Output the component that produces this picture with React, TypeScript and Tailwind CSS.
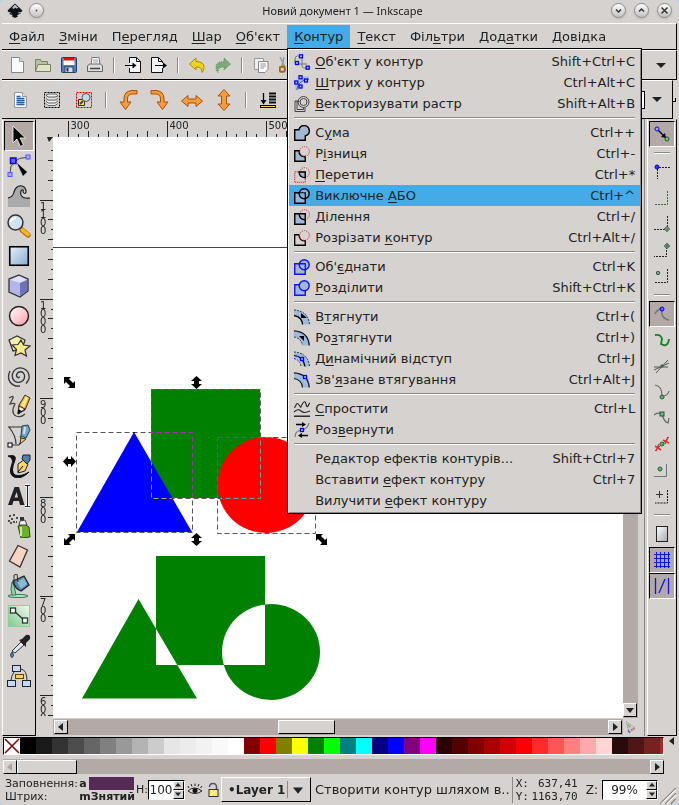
import type { ReactNode } from "react";

const raised = "border border-t-white border-l-white border-r-black border-b-black bg-[#d6d2cf]";
const pressed = "border border-t-black border-l-black border-r-white border-b-white bg-[#b3aaa7]";

function Icon({ size = 16, box = 16, children }: { size?: number; box?: number; children: ReactNode }) {
  return (
    <svg width={size} height={size} viewBox={`0 0 ${box} ${box}`} fill="none" className="shrink-0" aria-hidden="true">
      {children}
    </svg>
  );
}

/* ---------- menu icons ---------- */

const SQ = "M.75 4.75h10.5v10.5H.75z";
const FILL = "#a3b8d3";

const redCircle = <circle cx="10.5" cy="5.5" r="4.9" stroke="#d22" strokeWidth="1" strokeDasharray="1 1" />;

function node(x: number, y: number) {
  return <rect x={x} y={y} width="3" height="3" fill="#bcd" stroke="#00f" strokeWidth="1.3" />;
}

const menuIcons: Record<string, ReactNode> = {
  object: (
    <>
      <path d="M5 2H3.500Q1 2 1 5v4q0 1 2 1h10M8 3v9q0 2 2 2h3" stroke="#777" />
      {node(5.5, 0.8)}
      {node(1.5, 7.5)}
      {node(12.2, 12.2)}
    </>
  ),
  stroke: (
    <>
      <path d="M1 12C1 5 6 1 15 1v4C9 5 5 9 5 15H1z" fill="#a9c4e4" />
      <path d="M3 15c0-6 5-10 12-11" stroke="#557" />
      {node(5, 0.8)}
      {node(10.5, 4)}
      {node(0.8, 6)}
      {node(5, 10)}
    </>
  ),
  trace: (
    <>
      <path d="M4 5H1v10.500h10V12" stroke="#444" />
      <path d="M5.500 5.500H3v8h6.500V12" stroke="#444" />
      <circle cx="9.5" cy="6" r="5.5" stroke="#444" />
      <circle cx="9.5" cy="6" r="3.5" stroke="#444" />
    </>
  ),
  union: <path d="M.75 4.750H5A5.200 5.200 0 1 1 11.250 10.900v4.350H.750z" fill={FILL} stroke="#000" strokeWidth="1.4" />,
  difference: (
    <>
      <path d="M5.200 4.750H.750v10.500h10.500V10.500A5 5 0 0 1 5.200 4.750z" fill={FILL} stroke="#000" strokeWidth="1.4" />
      {redCircle}
    </>
  ),
  intersection: (
    <>
      <path d={SQ} stroke="#c00" strokeWidth="1" strokeDasharray="1 1" />
      {redCircle}
      <path d="M5 5h6.200v5.700Q5.500 10.500 5 5z" fill={FILL} stroke="#000" strokeWidth="1.4" />
    </>
  ),
  exclusion: (
    <>
      <path d={SQ} fill="#8fb6df" stroke="#000" strokeWidth="1.4" />
      <circle cx="10.2" cy="5.8" r="5" fill="#7fb4e6" stroke="#000" strokeWidth="1.4" />
      <path d="M5.500 4.750h5.750v6" stroke="#000" strokeWidth="1.2" />
    </>
  ),
  division: (
    <>
      <path d={SQ} fill={FILL} stroke="#000" strokeWidth="1.4" />
      {redCircle}
      <path d="M5 4.750q.5 6 6.250 6" stroke="#000" strokeWidth="1.4" />
    </>
  ),
  cut: (
    <>
      <path d="M5.200 4.750H.750v10.500h10.500V10.700A5 5 0 0 1 5.200 4.750" stroke="#000" strokeWidth="1.3" />
      {redCircle}
    </>
  ),
  combine: (
    <>
      <path d={SQ} fill={FILL} stroke="#11f" strokeWidth="1.4" />
      <circle cx="10.2" cy="5.8" r="5" fill={FILL} stroke="#11f" strokeWidth="1.4" />
      <path d="M5.500 4.750h5.750v6" stroke="#11f" strokeWidth="1.3" />
    </>
  ),
  breakApart: (
    <>
      <path d={SQ} fill={FILL} stroke="#11f" strokeWidth="1.4" />
      <circle cx="10.2" cy="5.8" r="5" fill={FILL} stroke="#11f" strokeWidth="1.4" />
    </>
  ),
  inset: (
    <>
      <path d="M0 1.500Q14 2 15.500 15.500H8.500Q8 8 0 6.500z" fill="#9dbcdd" />
      <path d="M0 1Q14 2 15.500 15" stroke="#335" strokeDasharray="2 1" />
      <path d="M0 6.500Q8 8 8.500 15.500" stroke="#000" strokeWidth="1.3" />
      <path d="M7 4v5h6z" fill="#000" />
    </>
  ),
  outset: (
    <>
      <path d="M0 1Q14 1.500 15.500 15.500H8.500Q8 8 0 6.500z" fill="#9dbcdd" />
      <path d="M0 .8Q14 1.500 15.300 15.500" stroke="#111" strokeWidth="1.3" />
      <path d="M0 7Q7 8 8.500 15" stroke="#335" strokeDasharray="2 1" />
      <path d="M5 6h5v5z" fill="#000" />
    </>
  ),
  dynamic: (
    <>
      <path d="M0 1.500Q14 2 15.500 15.500H8.500Q8 8 0 6.500z" fill="#9dbcdd" />
      <path d="M0 1Q14 2 15.500 15M0 7.500Q6 9 7 15" stroke="#335" strokeDasharray="2 1" />
      <path d="M0 4.500Q9 5 11 15.500" stroke="#000" strokeWidth="1.2" />
      {node(6.5, 6.5)}
    </>
  ),
  linked: (
    <>
      <path d="M0 1Q14 1.500 15.500 15.500H8.500Q8 8 0 6.500z" fill="#9dbcdd" />
      <path d="M0 .8Q14 1.500 15.300 15.500M0 6.500Q8 8 8.500 15.500" stroke="#111" strokeWidth="1.2" />
      {node(9.5, 3.5)}
    </>
  ),
  simplify: (
    <>
      <path d="M0 6q1 1 2-2t3 0 2 2 2-4 3 1 2 2 2-3" stroke="#222" strokeWidth="1.1" />
      <path d="M0 11q4-4 7-1t9 0" stroke="#222" strokeWidth="1.1" />
      <path d="M0 15.200h16" stroke="#111" strokeWidth="1.3" />
    </>
  ),
  reverse: (
    <>
      <path d="M1 15Q1 9 7 8q7-1 8-7" stroke="#777" strokeWidth="1.2" />
      <path d="M2 2.500h7M14 13.500H6" stroke="#000" strokeWidth="1.3" />
      <path d="M8 0l4 2.500L8 5zM8 11l-4 2.500L8 16z" fill="#000" />
      {node(6.5, 6.5)}
    </>
  ),
};

type MenuEntry = { before: string; key: string; after: string; accel?: string; icon?: string; active?: boolean };

const menuGroups: MenuEntry[][] = [
  [
    { before: "", key: "О", after: "б'єкт у контур", accel: "Shift+Ctrl+C", icon: "object" },
    { before: "", key: "Ш", after: "трих у контур", accel: "Ctrl+Alt+C", icon: "stroke" },
    { before: "", key: "В", after: "екторизувати растр", accel: "Shift+Alt+B", icon: "trace" },
  ],
  [
    { before: "С", key: "у", after: "ма", accel: "Ctrl++", icon: "union" },
    { before: "Р", key: "і", after: "зниця", accel: "Ctrl+-", icon: "difference" },
    { before: "", key: "П", after: "еретин", accel: "Ctrl+*", icon: "intersection" },
    { before: "Виключне ", key: "А", after: "БО", accel: "Ctrl+^", icon: "exclusion", active: true },
    { before: "", key: "Д", after: "ілення", accel: "Ctrl+/", icon: "division" },
    { before: "Розрізати ", key: "к", after: "онтур", accel: "Ctrl+Alt+/", icon: "cut" },
  ],
  [
    { before: "Об'", key: "є", after: "днати", accel: "Ctrl+K", icon: "combine" },
    { before: "", key: "Р", after: "озділити", accel: "Shift+Ctrl+K", icon: "breakApart" },
  ],
  [
    { before: "В", key: "т", after: "ягнути", accel: "Ctrl+(", icon: "inset" },
    { before: "Ро", key: "з", after: "тягнути", accel: "Ctrl+)", icon: "outset" },
    { before: "Д", key: "и", after: "намічний відступ", accel: "Ctrl+J", icon: "dynamic" },
    { before: "Зв'", key: "я", after: "зане втягування", accel: "Ctrl+Alt+J", icon: "linked" },
  ],
  [
    { before: "", key: "С", after: "простити", accel: "Ctrl+L", icon: "simplify" },
    { before: "Роз", key: "в", after: "ернути", icon: "reverse" },
  ],
  [
    { before: "Редактор ефектів контурів...", key: "", after: "", accel: "Shift+Ctrl+7" },
    { before: "Вставити ", key: "е", after: "фект контуру", accel: "Ctrl+7" },
    { before: "Вилучити ", key: "е", after: "фект контуру" },
  ],
];

function Label({ before, k, after }: { before: string; k: string; after: string }) {
  return (
    <span className="whitespace-pre">
      {before}
      <span className="underline underline-offset-2">{k}</span>
      {after}
    </span>
  );
}

function PathMenu() {
  return (
    <div className="absolute top-full left-0 z-20 w-[355px] border border-black bg-[#d6d2cf]">
      <div className="border border-t-white border-l-white border-r-[#8f8785] border-b-[#8f8785] py-px">
        {menuGroups.map((group, i) => (
          <div key={i}>
            {i > 0 && (
              <div className="px-[5px] py-[3px]">
                <div className="h-[2px] border-t border-b border-t-[#8f8785] border-b-white" />
              </div>
            )}
            {group.map((m) => (
              <button
                key={m.before + m.key + m.after}
                className={`flex h-[21px] w-full items-center gap-[5px] px-[5px] text-left ${m.active ? "bg-[#43ace8]" : ""}`}
              >
                <Icon>{m.icon ? menuIcons[m.icon] : null}</Icon>
                <Label before={m.before} k={m.key} after={m.after} />
                <span className="ml-auto">{m.accel}</span>
              </button>
            ))}
          </div>
        ))}
      </div>
    </div>
  );
}

const menus = [
  ["", "Ф", "айл"],
  ["", "З", "міни"],
  ["П", "е", "регляд"],
  ["", "Ш", "ар"],
  ["", "О", "б'єкт"],
  ["", "К", "онтур"],
  ["", "Т", "екст"],
  ["Філ", "ь", "три"],
  ["Дод", "а", "тки"],
  ["", "Д", "овідка"],
];

function MenuBar() {
  return (
    <nav className="flex border-t border-r border-b border-t-white border-r-black border-b-black py-px">
      {menus.map(([a, b, c]) => {
        const open = b === "К";
        return (
          <div key={b + c} className="relative">
            <button className={`h-[23px] px-[7px] ${open ? "bg-[#43ace8]" : ""}`}>
              <Label before={a} k={b} after={c} />
            </button>
            {open && <PathMenu />}
          </div>
        );
      })}
    </nav>
  );
}

/* ---------- title bar ---------- */

function RoundButton({ label, children }: { label: string; children: ReactNode }) {
  return (
    <button
      aria-label={label}
      className="flex size-[15px] items-center justify-center rounded-full border border-[#8e8a88] bg-linear-to-b from-white to-[#c4c0be] shadow-sm"
    >
      <Icon size={11} box={11}>
        {children}
      </Icon>
    </button>
  );
}

function TitleBar() {
  return (
    <header className="flex h-[23px] items-center px-[5px] pb-[2px]">
      <Icon size={16}>
        <path d="M8 .5L15 7q1 1.500-1 2l-3 .500 2 1.500-3 1 1 1.500-3 1.500-3-1.500.500-1.500L2 11l2-1.500L1.500 9Q0 8 1 7z" fill="#111" />
        <path d="M8 1.500l3.500 3.500-2 .500L8 4.500 7 6 5 5z" fill="#a9c8e8" />
        <path d="M3 9.500l2 1M11 11l3-1" stroke="#357" />
      </Icon>
      <span className="ml-[6px] w-[45px]">
        <RoundButton label="Меню вікна">
          <circle cx="5.5" cy="5.5" r="1" fill="#555" />
        </RoundButton>
      </span>
      <h1 className="flex-1 text-center font-['Noto_Sans',sans-serif] text-[11px] leading-[16px]">Новий документ 1 — Inkscape</h1>
      <div className="flex gap-2">
        <RoundButton label="Згорнути">
          <path d="M3 4.500l2.500 2.500L8 4.500" stroke="#333" strokeWidth="1.5" />
        </RoundButton>
        <RoundButton label="Розгорнути">
          <path d="M3 6.500L5.500 4 8 6.500" stroke="#333" strokeWidth="1.5" />
        </RoundButton>
        <RoundButton label="Закрити">
          <path d="M2.500 2.500l6 6M8.500 2.500l-6 6" stroke="#333" strokeWidth="1.5" />
        </RoundButton>
      </div>
    </header>
  );
}

/* ---------- toolbars ---------- */

function ToolSeparator() {
  return (
    <div className="flex w-3 shrink-0 justify-center">
      <div className="h-4 w-[2px] border-l border-r border-l-[#8f8785] border-r-white" />
    </div>
  );
}

const page = <path d="M2.500.500h8l4 4v11h-12z" fill="#fafafa" stroke="#888" />;

const commands: [string, ReactNode][] = [
  ["Створити", <>{page}<path d="M10.500.500v4h4" fill="#ddd" stroke="#999" /></>],
  ["Відкрити", <><path d="M.5 14V2.500h5l1 2h6V7" fill="#b9bf9a" stroke="#7b8262" /><path d="M.5 14.500L3 7.500h12.500v7z" fill="#dfe3c8" stroke="#7b8262" /></>],
  ["Зберегти", <><rect x=".5" y=".5" width="15" height="15" rx="1" fill="#4a7fc4" stroke="#1f3d70" /><rect x="2.5" y="1" width="11" height="7" fill="#fff" /><rect x="2.5" y="1" width="11" height="2.5" fill="#d11" /><rect x="4" y="10" width="8" height="5.5" fill="#dde" stroke="#345" /><rect x="5.5" y="11" width="2" height="3.5" fill="#234" /></>],
  ["Друк", <><path d="M4 8l1-7.500h7L13 8z" fill="#fff" stroke="#777" /><path d="M6 3h5M6 5h5" stroke="#999" /><path d="M.5 9l2-2h11l2 2v5.500H.500z" fill="#ddd" stroke="#666" /><path d="M3 11.500h10" stroke="#444" strokeWidth="1.5" /></>],
  ["", null],
  ["Імпорт", <><path d="M4.500 6V.500h7l4 4v11h-11V11" fill="#f4f4f4" stroke="#111" /><path d="M11.500.500v4h4" stroke="#111" /><path d="M0 8.500h9" stroke="#000" /><path d="M7.500 5.500l4 3-4 3z" fill="#000" /></>],
  ["Експорт", <><path d="M11.500 6V4.500l-4-4h-7v15h11V11" fill="#f4f4f4" stroke="#111" /><path d="M7.500.500v4h4" stroke="#111" /><path d="M4 8.500h9" stroke="#000" /><path d="M12 5.500l4 3-4 3z" fill="#000" /></>],
  ["", null],
  ["Вернути", <path d="M.5 7L7 1v3.500q8 0 8 6 0 3-2 5 0-6-6-5.500V13z" fill="#f2d21c" stroke="#b08a00" />],
  ["Повторити", <path d="M15.500 7L9 1v3.500q-8 0-8 6 0 3 2 5 0-6 6-5.500V13z" fill="#7cab78" stroke="#4f8a4c" strokeDasharray="1 1" />],
  ["", null],
  ["Копіювати", <><path d="M1.500 1.500h9v11h-9z" fill="#eee" stroke="#999" /><path d="M5.500 4.500h9.500v8l-3 3H5.500z" fill="#f8f8f8" stroke="#888" /><path d="M7.500 7h5.500M7.500 9h5.500M7.500 11h3.500" stroke="#999" /></>],
  ["Вирізати", <><path d="M1 0l5 10M5 0L3 10" stroke="#999" strokeWidth="1.5" /><rect x=".8" y="9.8" width="5" height="5" rx="1.5" stroke="#a66a00" strokeWidth="2" /></>],
];

const arrowProps = { fill: "#f79a3b", stroke: "#a9500a", strokeLinejoin: "round" as const };

const selectorTools: [string, ReactNode][] = [
  ["Виділити все", <><path d="M5.500 3.500h8l4 4v11h-12z" fill="#f8f8f8" stroke="#999" /><path d="M13.500 3.500v4h4" fill="#ddd" stroke="#999" /><path d="M7.500 7.500h4M7.500 9.500h8M7.500 11.500h8M7.500 13.500h8M7.500 15.500h8" stroke="#2a5fa5" strokeWidth="1.3" /></>],
  ["Виділити в усіх шарах", <><rect x="3.5" y="3.5" width="15" height="15" stroke="#000" strokeDasharray="2 1" /><path d="M5 6l3-1h7l2 2-3 1H7zM5 9.500l2 1.500h7l3-1.500M5 12l2 2h7l3-2M5 14.500l2 2h7l3-2" fill="#eee" stroke="#666" /></>],
  ["Зняти виділення", <><rect x="3.5" y="3.5" width="15" height="15" stroke="#d00" strokeDasharray="2 1" /><path d="M5.500 10.500h6v6h-6z" fill="#ffd94a" stroke="#333" /><circle cx="13" cy="8.5" r="4" fill="#c5d9ec" stroke="#555" /><path d="M10 12l-3 3" stroke="#444" strokeWidth="2" /></>],
  ["", null],
  ["Обернути ліворуч", <path d="M20 1.500h-5Q7 2 7 10v3H3l5.500 7.500L14 13h-3.500v-3q0-5 4.500-5h5z" {...arrowProps} />],
  ["Обернути праворуч", <path d="M2 1.500h5q8 .500 8 8.500v3h4l-5.500 7.500L8 13h3.500v-3q0-5-4.500-5H2z" {...arrowProps} />],
  ["Віддзеркалити горизонтально", <path d="M.5 12L7 6.500v3.500h8V6.500l6.500 5.500L15 17.500V14H7v3.500z" {...arrowProps} />],
  ["Віддзеркалити вертикально", <path d="M11 .5L17 7h-3.500v8H17l-6 6.500L5 15h3.500V7H5z" {...arrowProps} />],
  ["", null],
  ["Опустити на задній план", <><path d="M6.500 4v8" stroke="#000" strokeWidth="1.3" /><path d="M3.500 11h6l-3 4.500z" fill="#000" /><path d="M12 4.500h7M12 7.500h7M12 10.500h7M12 13.500h7" stroke="#111" strokeWidth="2" /><rect x="3.5" y="16.5" width="15" height="2" fill="#ffd24a" stroke="#000" /></>],
];

function CommandBars() {
  return (
    <>
      <div className="flex h-[30px] items-center border-t border-r border-b border-t-white border-r-black border-b-black pl-[2px]">
        {commands.map(([label, art], i) =>
          art ? (
            <button key={i} aria-label={label} className="flex w-[26px] shrink-0 justify-center">
              <Icon>{art}</Icon>
            </button>
          ) : (
            <ToolSeparator key={i} />
          ),
        )}
        <button aria-label="Ще" className="mr-[10px] ml-auto">
          <Icon size={10} box={10}>
            <path d="M0 3h10L5 8z" fill="#222" />
          </Icon>
        </button>
      </div>
      <div className="flex h-[39px]">
        <div className="flex flex-1 items-center border-t border-r border-b border-t-white border-r-black border-b-black pl-[2px]">
          {selectorTools.map(([label, art], i) =>
            art ? (
              <button key={i} aria-label={label} className="flex w-8 shrink-0 justify-center">
                <Icon size={22} box={22}>
                  {art}
                </Icon>
              </button>
            ) : (
              <ToolSeparator key={i} />
            ),
          )}
          <input aria-label="X" className="ml-auto h-[18px] w-10 border border-black bg-white" />
          <button aria-label="Ще" className="mr-[10px] ml-[7px]">
            <Icon size={10} box={10}>
              <path d="M0 2h10L5 7z" fill="#222" />
            </Icon>
          </button>
        </div>
        <div className="flex w-1 items-center">
          <div className="h-[4px] w-[3px] border-r border-b border-black" />
        </div>
      </div>
    </>
  );
}

/* ---------- toolbox ---------- */

const tools: [string, ReactNode][] = [
  ["Виділення", <path d="M6 2v17l4-4 3.500 7.500 3-1.500-3.500-7h5.500z" fill="#000" stroke="#fff" strokeWidth=".8" />],
  ["Вузли", <><path d="M3 20Q2 4 21 3" stroke="#444" /><rect x="1" y="18.5" width="4" height="4" fill="#aaf" stroke="#55f" /><rect x="19" y="1" width="4" height="4" fill="#aaf" stroke="#55f" /><rect x="3.5" y="4" width="5.5" height="5.5" fill="#66f" stroke="#00f" strokeWidth="1.5" /><path d="M10 9l10 9-4 4z" fill="#000" /></>],
  ["Корекція", <><path d="M1 14q5-1 6-6 2-7 8-6 5 1 5 6-2-3-5-2-2 2-1 5 2 4 9 3v9H1z" fill="#aaa" /><path d="M1 14q5-1 6-6 2-7 8-6 4 1 4 6-1 3-3 0 1-3-1-2-2 1-1 5 2 4 9 3" stroke="#222" strokeWidth="1.2" /></>],
  ["Масштаб", <><path d="M15 16l6 5" stroke="#b9770a" strokeWidth="5.5" strokeLinecap="round" /><path d="M15.500 16l5.500 4.500" stroke="#fbb62e" strokeWidth="3.5" strokeLinecap="round" /><circle cx="8.5" cy="8.5" r="7.5" fill="#cfe3f5" stroke="#333" strokeWidth="1.5" /><path d="M4 8q1-4 5-4" stroke="#fff" strokeWidth="2" /></>],
  ["Прямокутник", <rect x="2.75" y="2.75" width="18.5" height="18.5" fill="url(#gBlue)" stroke="#000" strokeWidth="1.6" />],
  ["Паралелепіпед", <><path d="M12 1l9 4v12l-8 6-11-5V5z" fill="#aaaee6" stroke="#333" strokeWidth="1.3" /><path d="M3 6l9-4 8 4-7 3z" fill="#e0e1fa" /><path d="M13 9l7-3v11l-7 5z" fill="#6d72bb" /><path d="M3 6l10 3v13L3 17z" fill="#b3b6ea" /></>],
  ["Еліпс", <circle cx="12" cy="12" r="9.5" fill="url(#gPink)" stroke="#222" strokeWidth="1.5" />],
  ["Зірка", <><path d="M2 6l8-4 8 4-3 9-9 2z" fill="#f5efae" stroke="#333" strokeWidth="1.3" /><path d="M14 6l2.500 5 6.500 1-5 4 1.500 6-5.500-3-6 2.500 1.500-6L5 11l6-.500z" fill="#fbe98a" stroke="#333" strokeWidth="1.2" /></>],
  ["Спіраль", <path d="M12.500 12.500q-.5 2-2 1-2-2 0-4.500 3-2.500 6 0 2.500 4-.500 7.500-4 3.500-8.500.500-4-4-1-9.500 4-5 10-3 6.500 3 5.500 10-1 3-3 5M3 7q-3 6 0 11 4 5 10 4" stroke="#333" strokeWidth="1.3" />],
  ["Олівець", <><path d="M2 4q5-3 4 0l-3 6q7-2 4 2-3 7 2 10 5 2 9-2" stroke="#444" strokeWidth="1.3" /><path d="M11 20l1-9 6-10 5 3-5 12z" fill="#f7a928" stroke="#333" /><path d="M14 11l5-9 2 2-4 10z" fill="#fde98e" /><path d="M11 20l1-8 6 3z" fill="#fbe9d0" stroke="#222" /><path d="M11 20l.5-5 3 2z" fill="#000" /></>],
  ["Перо", <><path d="M1 3h14M9 20Q9 12 2 3M4 21h8q4-5 1-9" stroke="#333" strokeWidth="1.2" /><rect x="1" y="19" width="4" height="4" fill="#fff" stroke="#000" /><path d="M13 20l1-6 5 1z" fill="#ffc84a" stroke="#333" /><path d="M14 12l1-10 6-1 2 5-4 8z" fill="#6fa5cb" stroke="#244" /><path d="M17 10l1-7" stroke="#cfe4f3" strokeWidth="2" /></>],
  ["Каліграфія", <><path d="M1 2q9-2 7 4-5 12 0 15 6 2 14-3-8 8-15 5-6-3-2-13Q7 4 1 2z" fill="#111" stroke="#111" /><path d="M11 19l0-9 6-4 4 4-3 7z" fill="#ffd66b" stroke="#222" /><path d="M15 5l1-4h7l0 5-3 4z" fill="#4d7fae" stroke="#222" /><path d="M11 18l5-6" stroke="#000" /></>],
  ["Текст", <><path d="M1 21L7.500 3H12l5.500 18h-4.500l-1-4H6.500l-1.200 4zM7.500 13.500h3.500L9.700 8z" fill="#222" fillRule="evenodd" /><path d="M18 1.500h5M18 22.500h5M20.500 2v20" stroke="#fff" strokeWidth="3" /><path d="M18 1.500h5M18 22.500h5M20.500 2v20" stroke="#222" strokeWidth="1.2" /></>],
  ["Розпилювач", <><path d="M11 12l6-2 5 3 1 10-9 1z" fill="#6cb32c" stroke="#25500d" /><path d="M14 13v9" stroke="#c8ec98" strokeWidth="2" /><path d="M12 11l1-4 5-1 2 5z" fill="#eee" stroke="#444" /><rect x="13" y="3" width="4" height="3.5" fill="#333" /><path d="M2 2h2M6 1h2M4 5h2M9 4h2M1 7h2M6 8h2M9 8h1M3 9h2" stroke="#222" strokeWidth="1.6" /></>],
  ["Гумка", <path d="M11 1.500L20.500 6l-7.500 17L2.500 17z" fill="#f8d4c2" stroke="#333" strokeWidth="1.3" />],
  ["Заливка", <><ellipse cx="11" cy="22" rx="10" ry="1.6" fill="#aee0be" stroke="#376" /><path d="M5 8q-2 7 0 13h4l-2-9z" fill="#8fd0a6" stroke="#376" /><path d="M6 7l11-5 5 9-8 6q-6-2-8-10z" fill="#5588ae" stroke="#222" strokeWidth="1.3" /><path d="M10 8l7-4 3 6-6 5z" fill="#8fb6d3" /><path d="M7 9V1l3-1 1 8" stroke="#333" /></>],
  ["Градієнт", <><rect x="1.5" y="1.5" width="21" height="21" fill="url(#gGreen)" stroke="#8ccf9a" /><path d="M6 6l12 11" stroke="#333" strokeWidth="1.3" /><rect x="3.5" y="4" width="5" height="5" fill="#fff" stroke="#333" strokeWidth="1.3" /><rect x="15.5" y="14" width="5" height="5" fill="#fff" stroke="#333" strokeWidth="1.3" /></>],
  ["Піпетка", <><path d="M5 17L14 8l3 3-9 8z" fill="#dde8f0" stroke="#333" /><path d="M12 6l3-1 4-4q5-1 4 4l-4 4v4z" fill="#222" /><path d="M5 18q3 4 0 5.500Q2 22 5 18z" fill="#4f83bd" stroke="#245" /></>],
  ["З'єднання", <><path d="M7 8Q4 12 4 17M14 5q6 1 6 12" stroke="#333" /><g fill="#c3dbf2" stroke="#223"><rect x="5.5" y="1.5" width="8" height="6" /><rect x=".5" y="16.5" width="8" height="6" /><rect x="15.5" y="16.5" width="8" height="6" /></g><rect x="8.5" y="10.5" width="8" height="4" fill="#ffd24a" stroke="#640" /></>],
];

function Toolbox() {
  return (
    <aside className="w-[34px] shrink-0 border border-t-[#d6d2cf] border-l-white border-r-black border-b-black py-px pl-px">
      {tools.map(([label, art], i) => (
        <button
          key={label}
          aria-label={label}
          className={`flex h-[30px] w-[30px] items-center justify-center ${i === 0 ? pressed : ""}`}
        >
          <Icon size={24} box={24}>
            {art}
          </Icon>
        </button>
      ))}
    </aside>
  );
}

/* ---------- snap bar ---------- */

const dot = (x: number, y: number, fill = "#55b75b", stroke = "#264") => <circle cx={x} cy={y} r="2" fill={fill} stroke={stroke} />;

const snaps: { label: string; art?: ReactNode; on?: boolean }[] = [
  { label: "Прилипання", on: true, art: <><path d="M3 3l8 8" stroke="#000" strokeWidth="1.5" /><path d="M12 12l-5-1 4-4z" fill="#000" />{dot(3, 3, "#aaf", "#00f")}{dot(13, 13, "#7c7", "#152")}</> },
  { label: "" },
  { label: "Рамки", art: <><path d="M3.500 5v10M5 3.500h11" stroke="#222" strokeDasharray="2 1" />{dot(3, 3, "#33f", "#00c")}</> },
  { label: "Краї рамок", art: <path d="M13.500 1v13.500H0" stroke="#3b6b42" strokeDasharray="2 1" /> },
  { label: "Кути рамок", art: <><path d="M13.500 0v14M0 13.500h12" stroke="#222" strokeDasharray="2 1" /><path d="M13 10l3 3-3 3-3-3z" fill="#688c6c" stroke="#354" strokeWidth=".5" /></> },
  { label: "Середини країв", art: <><path d="M12.500 5v9.500H0" stroke="#222" strokeDasharray="2 1" /><path d="M13 1l3 3-3 3-3-3z" fill="#5a8460" stroke="#354" strokeWidth=".5" /></> },
  { label: "Центри рамок", art: <><path d="M13.500 1v13.500H1" stroke="#222" strokeDasharray="2 1" /><circle cx="4" cy="5" r="1.7" fill="#7cb083" stroke="#355" /></> },
  { label: "" },
  { label: "Вузли", on: true, art: <><path d="M1 8Q3 3 8 3q-2 9 7 11" stroke="#777" strokeWidth="1.5" />{dot(8, 3, "#66f", "#00f")}</> },
  { label: "Контури", art: <path d="M1 3q6-1 7 4l-1 5q7 4 8-5" stroke="#178022" strokeWidth="1.8" /> },
  { label: "Перетини", art: <><path d="M0 12L15 5M2 15L14 2M0 9h14" stroke="#555" /><path d="M8 6l2 2-2 2-2-2z" fill="#274" /></> },
  { label: "Гострі вузли", art: <><path d="M1 1q7 1 7 11 6 0 7-5" stroke="#666" strokeWidth="1.2" />{dot(8, 13)}</> },
  { label: "Гладкі вузли", art: <><path d="M0 5q3-3 8-1 2 8 6 9l1-5" stroke="#666" strokeWidth="1.2" /><rect x="6" y="2" width="4" height="4" fill="#6b7" stroke="#253" /></> },
  { label: "Середини відрізків", art: <><path d="M1 15L15 1" stroke="#833" /><path d="M1 10l6 4M2 15l3-7M9 4l6 3M11 8l3-7" stroke="#d33" strokeWidth="1.6" />{dot(8, 8)}</> },
  { label: "Центри об'єктів", art: <><path d="M12.500 2v12.500H0" stroke="#777" />{dot(6, 7)}</> },
  { label: "Центри обертання", art: <><path d="M13.500 2v13H1" stroke="#111" strokeDasharray="2 1" /><path d="M2 6.500h7M5.500 3v7" stroke="#333" /></> },
  { label: "" },
  { label: "Межа сторінки", art: <rect x="2.5" y=".5" width="11" height="15" fill="url(#gPage)" stroke="#222" /> },
  { label: "Сітка", on: true, art: <path d="M2.500 0v16M6.500 0v16M10.500 0v16M14.500 0v16M0 2.500h16M0 6.500h16M0 10.500h16M0 14.500h16" stroke="#11e" /> },
  { label: "Напрямні", on: true, art: <path d="M1.500 0v16M14.500 0v16M5 15L11 1" stroke="#11e" strokeWidth="1.3" /> },
];

function SnapBar() {
  return (
    <aside className="w-[30px] shrink-0 border border-t-[#d6d2cf] border-l-white border-r-black border-b-black py-px pl-px">
      {snaps.map((s, i) =>
        s.art ? (
          <button key={i} aria-label={s.label} className={`flex h-[26px] w-[26px] items-center justify-center ${s.on ? pressed : ""}`}>
            <Icon>{s.art}</Icon>
          </button>
        ) : (
          <div key={i} className="flex h-3 w-[26px] items-center justify-center">
            <div className="h-[2px] w-4 border-t border-b border-t-[#8f8785] border-b-white" />
          </div>
        ),
      )}
    </aside>
  );
}

/* ---------- canvas ---------- */

const tickIndexes = Array.from({ length: 58 }, (_, i) => i);
const STEP = 9.91;

function HRuler() {
  // ticks start at 290 units, 10 units apart
  return (
    <svg className="h-[18px] w-full" aria-hidden="true">
      {tickIndexes.map((i) => {
        const x = Math.round(5 + i * STEP) + 0.5;
        const major = i % 10 === 1;
        const len = major ? 16 : i % 2 === 1 ? 6 : 3;
        return (
          <g key={i}>
            <path d={`M${x} 18v-${len}`} stroke="#222" />
            {major && (
              <text x={x + 2} y="10" fontSize="10" fill="#222">
                {300 + Math.floor(i / 10) * 100}
              </text>
            )}
          </g>
        );
      })}
    </svg>
  );
}

function VRuler() {
  // labels are stacked digit by digit under every major tick
  return (
    <div className="relative mb-[20px] w-[17px] shrink-0 overflow-hidden">
      <svg className="absolute inset-0 size-full" aria-hidden="true">
        <path d="M11 18h6l-4 5z" fill="#222" />
        {tickIndexes.map((i) => {
          const y = Math.round(31 + i * STEP) + 0.5;
          const major = i % 10 === 5;
          const len = major ? 13 : i % 2 === 1 ? 5 : 2;
          const value = String(1100 - Math.floor(i / 10) * 100);
          return (
            <g key={i}>
              <path d={`M17 ${y}h-${len}`} stroke="#222" />
              {major && (
                <text fontSize="10" fill="#222">
                  {value.split("").map((d, n) => (
                    <tspan key={n} x="4" y={y + 9 + n * 8}>
                      {d}
                    </tspan>
                  ))}
                </text>
              )}
            </g>
          );
        })}
      </svg>
    </div>
  );
}

const STRAIGHT = "M-6.5 0l5-5.500v3h3v-3l5 5.500-5 5.500v-3h-3v3z";
const DIAGONAL = "M-5.5-5.500h7L-.5-3.500 3.500.500 5.500-1.500v7h-7L.5 3.500-3.500-.500-5.500 1.500z";

const handles: [number, number, number, string][] = [
  [16.5, 245.5, 0, DIAGONAL],
  [143.5, 245.5, 90, STRAIGHT],
  [16.5, 324.5, 0, STRAIGHT],
  [16.5, 402.5, 90, DIAGONAL],
  [143.5, 402.5, 90, STRAIGHT],
  [268.5, 402.5, 0, DIAGONAL],
];

function Canvas() {
  return (
    <svg className="w-full flex-1 bg-white" role="img" aria-label="Малюнок">
      <path d="M0 110.500h700" stroke="#444" />
      <rect x="98" y="252" width="109" height="109" fill="#008000" />
      <path d="M81 295l58 100H24z" fill="#00f" />
      <ellipse cx="213" cy="348" rx="48.5" ry="48" fill="#f00" />
      <g stroke="#aaa" fill="none" strokeDasharray="5 3" className="mix-blend-difference">
        <rect x="98.5" y="252.5" width="109" height="109" />
        <rect x="23.5" y="295.5" width="116" height="100" />
        <rect x="164.5" y="300.5" width="98" height="96" />
      </g>
      <path
        d="M103 419h109v109H103zM85.500 462L144 561.500H29zM169 515a49 48 0 1 0 98 0a49 48 0 1 0-98 0z"
        fill="#008000"
        fillRule="evenodd"
      />
      {handles.map(([x, y, r, d]) => (
        <path key={`${x}-${y}`} d={d} fill="#000" transform={`translate(${x} ${y}) rotate(${r})`} />
      ))}
    </svg>
  );
}

function ScrollButton({ label, d, dim }: { label: string; d: string; dim?: boolean }) {
  return (
    <button aria-label={label} className={`flex size-[14px] shrink-0 items-center justify-center ${raised}`}>
      <Icon size={8} box={8}>
        <path d={d} fill={dim ? "#aaa3a0" : "#222"} />
      </Icon>
    </button>
  );
}

const LEFT = "M6 0v8L1 4z";
const RIGHT = "M2 0v8l5-4z";
const DOWN = "M0 2h8L4 7z";
const UP = "M0 6h8L4 1z";

function Workspace() {
  return (
    <main className="flex flex-1">
      <Toolbox />
      <section className="flex min-w-0 flex-1 border-r border-[#8f8785] pr-[6px]">
        <VRuler />
        <div className="flex min-w-0 flex-1 flex-col">
          <HRuler />
          <Canvas />
          <div className="mt-px flex h-[16px] items-center bg-[#b3aaa7] px-px">
            <ScrollButton label="Ліворуч" d={LEFT} />
            <div className="flex-[210]" />
            <div className={`h-[14px] w-[57px] ${raised}`} />
            <div className="flex-[272]" />
            <ScrollButton label="Праворуч" d={RIGHT} />
          </div>
          <div className="h-px" />
        </div>
        <div className="flex w-[15px] flex-col pt-[18px]">
          <div className="flex flex-1 flex-col justify-end bg-[#b3aaa7] pb-px">
            <ScrollButton label="Донизу" d={DOWN} />
          </div>
          <div className="flex h-[18px] items-center justify-center">
            <Icon size={13}>
              <path d="M3 1l11 8-8 6z" fill="#ccc" stroke="#777" strokeDasharray="1 1" />
              <path d="M5 5l3 3" stroke="#3a3" strokeWidth="2" strokeDasharray="1 1" />
              <path d="M9 11l4-2" stroke="#c33" strokeWidth="2" strokeDasharray="1 1" />
              <path d="M5 12l3 2" stroke="#33c" strokeWidth="2" strokeDasharray="1 1" />
            </Icon>
          </div>
        </div>
      </section>
      <div className="w-[2px]" />
      <SnapBar />
    </main>
  );
}

/* ---------- palette ---------- */

const swatches = [
  "#000000", "#1a1a1a", "#333333", "#4d4d4d", "#666666", "#808080", "#999999", "#b3b3b3", "#cccccc", "#e6e6e6",
  "#ececec", "#f2f2f2", "#f9f9f9", "#ffffff", "#800000", "#ff0000", "#808000", "#ffff00", "#008000", "#00ff00",
  "#008080", "#00ffff", "#000080", "#0000ff", "#800080", "#ff00ff", "#2b0000", "#550000", "#800000", "#aa0000",
  "#d40000", "#ff0000", "#ff2a2a", "#ff5555", "#ff8080", "#ffaaaa", "#ffd5d5", "#280b0b", "#501616", "#782121",
  "#a02c2c",
];

function Palette() {
  return (
    <div className="mt-px">
      <div className="flex pl-px">
        <div className="flex min-w-0 flex-1 overflow-hidden border border-t-black border-l-black border-r-white border-b-white">
          <button aria-label="Без кольору" className="size-4 shrink-0 bg-white">
            <Icon>
              <path d="M1 1l14 14M15 1L1 15" stroke="#800000" strokeWidth="1.5" />
            </Icon>
          </button>
          {swatches.map((c, i) => (
            <button key={i} aria-label={c} className="size-4 shrink-0" style={{ backgroundColor: c }} />
          ))}
        </div>
        <button aria-label="Палітра" className="h-2 w-[13px] pl-1">
          <Icon size={8} box={8}>
            <path d={LEFT} fill="#222" />
          </Icon>
        </button>
      </div>
      <div className="mt-[4px] mr-[13px] ml-px flex h-[15px] items-center bg-[#b3aaa7]">
        <ScrollButton label="Назад" d={LEFT} dim />
        <div className={`h-[14px] w-[60px] ${raised}`} />
        <div className="flex-1" />
        <ScrollButton label="Вперед" d={RIGHT} />
      </div>
    </div>
  );
}

/* ---------- status bar ---------- */

function Spin({ id, value, width }: { id: string; value: string; width: string }) {
  return (
    <div className="flex h-[20px] border border-t-black border-l-black border-r-white border-b-white">
      <input id={id} defaultValue={value} className={`${width} bg-white text-center text-[12px] outline-none`} />
      <div className="flex w-[11px] flex-col">
        {[UP, DOWN].map((d) => (
          <button key={d} aria-label={d === UP ? "Більше" : "Менше"} className={`flex flex-1 items-center justify-center ${raised}`}>
            <Icon size={6} box={8}>
              <path d={d} fill="#222" />
            </Icon>
          </button>
        ))}
      </div>
    </div>
  );
}

function StatusBar() {
  return (
    <footer className="flex h-[31px] items-center pl-[3px]">
      <div className="grid w-[130px] grid-cols-[1fr_auto] text-[11px] leading-[13px]">
        <span>Заповнення:</span>
        <span className="flex gap-[2px] font-bold">
          а<span className="h-[13px] w-[45px] bg-[#552b55]" />
        </span>
        <span>Штрих:</span>
        <span className="text-right font-bold">mЗнятий</span>
      </div>
      <label htmlFor="opacity" className="pl-px text-[11px]">
        H:
      </label>
      <Spin id="opacity" value="100" width="w-[24px]" />
      <button aria-label="Видимість шару" className="ml-[2px]">
        <Icon>
          <path d="M1 9q6-6 14 0-7 5-14 0z" fill="#ddd" stroke="#222" />
          <circle cx="8" cy="8.5" r="2.5" fill="#111" />
          <path d="M2 6L1 4M5 4.500L4 2M8 4V1.500M11 4.500l1-2.500M13.500 6L15 4" stroke="#222" />
        </Icon>
      </button>
      <button aria-label="Заблокувати шар" className="ml-[2px]">
        <Icon>
          <path d="M4.500 5q0-3.500 3.500-3.500t3.500 4V8" stroke="#555" strokeWidth="1.5" />
          <rect x="4" y="7.5" width="9" height="7" fill="#ffe680" stroke="#333" />
          <path d="M5 14l6-6" stroke="#fff" />
        </Icon>
      </button>
      <div className={`relative flex h-[25px] w-[90px] items-center ${raised}`}>
        <select aria-label="Шар" className="w-full appearance-none pl-[6px] text-[12px] font-bold outline-none">
          <option>•Layer 1</option>
        </select>
        <div className="pointer-events-none absolute inset-y-[3px] right-0 flex w-[23px] items-center border-l border-[#8f8785] pl-[5px]">
          <Icon size={10} box={8}>
            <path d={DOWN} fill="#222" />
          </Icon>
        </div>
      </div>
      <p className="min-w-0 flex-1 overflow-hidden pl-[4px] whitespace-nowrap">Створити контур шляхом в..</p>
      <div className="w-[66px] shrink-0 border-l border-[#8f8785] pl-[3px] font-['DejaVu_Sans_Mono',monospace] text-[11px] leading-[13px]">
        <div className="flex justify-between">
          <span>X:</span>
          <span>637,41</span>
        </div>
        <div className="flex justify-between">
          <span>Y:</span>
          <span>1163,70</span>
        </div>
      </div>
      <label htmlFor="zoom" className="pr-[4px] pl-[8px] text-[12px]">
        Z:
      </label>
      <Spin id="zoom" value="99%" width="w-[43px]" />
      <div className="self-end pl-[2px]">
        <Icon size={17}>
          <path d="M0 15L15 0M5 15L15 5M10 15l5-5" stroke="#8f8785" strokeWidth="1.3" />
          <path d="M1.500 15L15 1.500M6.500 15L15 6.500" stroke="#fff" />
        </Icon>
      </div>
    </footer>
  );
}

function Gradients() {
  return (
    <svg className="absolute size-0" aria-hidden="true">
      <linearGradient id="gBlue" x1="0" y1="0" x2="1" y2="1">
        <stop stopColor="#e6f1fa" />
        <stop offset="1" stopColor="#87abd0" />
      </linearGradient>
      <linearGradient id="gPink" x1="0" y1="0" x2="1" y2="1">
        <stop stopColor="#fff" />
        <stop offset="1" stopColor="#ff9aa6" />
      </linearGradient>
      <linearGradient id="gGreen" x1="0" y1="1" x2="1" y2="0">
        <stop stopColor="#7cc98c" />
        <stop offset="1" stopColor="#f2fbf4" />
      </linearGradient>
      <linearGradient id="gPage" x1="0" y1="0" x2="1" y2="1">
        <stop stopColor="#fff" />
        <stop offset="1" stopColor="#aaa" />
      </linearGradient>
    </svg>
  );
}

export default function App() {
  return (
    <div className="bg-[#9fd6f5] font-['DejaVu_Sans',sans-serif] text-[13px] leading-[16px] text-[#222]">
      <Gradients />
      <div className="flex min-h-screen flex-col rounded-[4px] bg-[#d6d2cf] px-[2px]">
        <TitleBar />
        <MenuBar />
        <CommandBars />
        <Workspace />
        <Palette />
        <StatusBar />
      </div>
    </div>
  );
}
